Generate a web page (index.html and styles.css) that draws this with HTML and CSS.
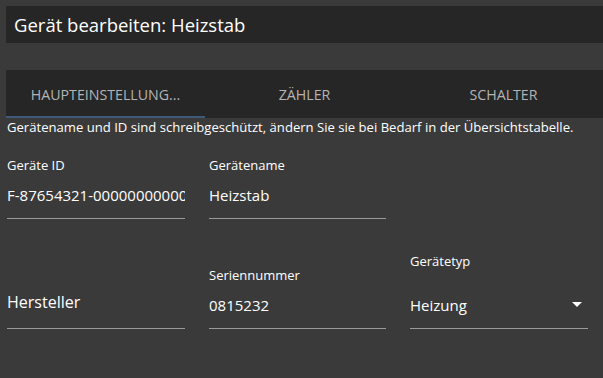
FILE: index.html
```html
<!DOCTYPE html>
<html>
<head>
    <title>Gerät bearbeiten</title>
    <link rel="stylesheet" href="styles.css">
</head>
<body>
    <div class="dialog">
        <div class="dialog__title">Gerät bearbeiten: Heizstab</div>
        <div class="tabs">
            <div class="tabs__item tabs__item--active">HAUPTEINSTELLUNG...</div>
            <div class="tabs__item">ZÄHLER</div>
            <div class="tabs__item">SCHALTER</div>
        </div>
        <p class="dialog__hint">Gerätename und ID sind schreibgeschützt, ändern Sie sie bei Bedarf in der Übersichtstabelle.</p>
        <div class="form">
            <div class="field">
                <label class="field__label">Geräte ID</label>
                <div class="field__input field__input--clip">F-87654321-0000000000000</div>
            </div>
            <div class="field">
                <label class="field__label">Gerätename</label>
                <div class="field__input">Heizstab</div>
            </div>
            <div class="field"></div>
            <div class="field">
                <div class="field__input field__input--placeholder">Hersteller</div>
            </div>
            <div class="field">
                <label class="field__label">Seriennummer</label>
                <div class="field__input">0815232</div>
            </div>
            <div class="field">
                <label class="field__label field__label--select">Gerätetyp</label>
                <div class="field__input field__input--select">
                    <span>Heizung</span>
                    <!-- Pfeil für das Auswahlfeld -->
                    <svg class="field__arrow" width="10" height="5" viewBox="0 0 10 5"><path d="M0 0h10L5 5z" fill="#fff"/></svg>
                </div>
            </div>
        </div>
    </div>
</body>
</html>
```

FILE: styles.css
```css
* {
    margin: 0;
    padding: 0;
    box-sizing: border-box;
}
body {
    background: #3a3a3a;
    color: #fff;
    font-family: "Open Sans", "Noto Sans", sans-serif;
}
.dialog {
    padding: 6px 0 0 6px;
}
.dialog__title {
    height: 37px;
    padding-left: 8px;
    background: #262626;
    font-size: 18.5px;
    line-height: 37px;
}
.tabs {
    display: flex;
    margin-top: 27px;
    height: 48px;
    background: #262626;
}
.tabs__item {
    width: 201px;
    display: flex;
    align-items: center;
    justify-content: center;
    font-size: 14.2px;
    color: #b4b4b4;
}
.tabs__item--active {
    border-bottom: 2px solid #3e5a78;
    padding-top: 2px;
}
.dialog__hint {
    padding-left: 1px;
    font-size: 13.1px;
    line-height: 18px;
}
.form {
    display: grid;
    grid-template-columns: 178px 177px 178px;
    column-gap: 24px;
    row-gap: 34px;
    align-items: end;
    padding-left: 1px;
    margin-top: 21px;
}
.field {
    display: flex;
    flex-direction: column;
}
.field__label {
    font-size: 13px;
    line-height: 16px;
    margin-bottom: 10px;
}
.field__label--select {
    margin-bottom: 24px;
}
.field__input {
    font-size: 15px;
    line-height: 24px;
    padding-bottom: 11px;
    border-bottom: 1px solid #9a9a9a;
    white-space: nowrap;
}
.field__input--clip {
    overflow: hidden;
}
.field__input--placeholder {
    font-size: 16px;
    padding-bottom: 14px;
}
.field__input--select {
    display: flex;
    align-items: center;
    justify-content: space-between;
    padding-right: 6px;
}
.field__arrow {
    margin-top: -1px;
}
```
